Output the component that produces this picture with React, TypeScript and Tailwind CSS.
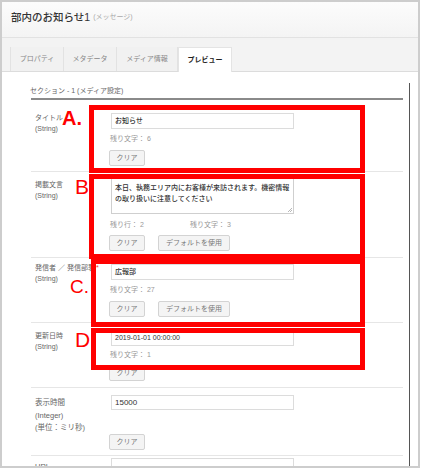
import React from 'react';

const font = { fontFamily: '"Liberation Sans", "Noto Sans CJK JP", sans-serif' };

const tabs = [
  { label: 'プロパティ', w: 'w-[54px]' },
  { label: 'メタデータ', w: 'w-[53px]' },
  { label: 'メディア情報', w: 'w-[61px]' },
];

const Btn = ({ children, w }: { children: React.ReactNode; w: string }) => (
  <div
    className={`${w} h-[16px] flex items-center justify-center border border-[#d3d3d3] bg-[#f4f4f4] rounded-[2px] text-[7px] text-[#777]`}
  >
    {children}
  </div>
);

const Field = ({ value, h = 'h-[16px]', big = false }: { value: string; h?: string; big?: boolean }) => (
  <div
    className={`ml-[2px] w-[183px] ${h} border border-[#dcdcdc] bg-white flex items-center px-[3px] text-[#333] ${
      big ? 'text-[8px]' : 'text-[7px] font-medium'
    }`}
  >
    {value}
  </div>
);

const Label = ({ lines, req = false, mt = 'mt-0' }: { lines: string[]; req?: boolean; mt?: string }) => (
  <div className={`w-[78px] pl-[4px] ${mt} text-[7px] leading-[11px] text-[#666] shrink-0`}>
    {lines.map((l, i) => (
      <div key={i} className="whitespace-nowrap">
        {l}
        {req && i === 0 && <span className="text-[#e33] ml-[1px]">*</span>}
      </div>
    ))}
  </div>
);

const Remain = ({ children, mt }: { children: React.ReactNode; mt: string }) => (
  <div className={`${mt} ml-[1px] h-[12px] leading-[12px] text-[7px] text-[#999] flex`}>{children}</div>
);

export default function App() {
  return (
    <div className="relative w-[422px] h-[470px] bg-white overflow-hidden" style={font}>
      <div className="w-[420px] h-[468px] border-2 border-[#cdcdcd] bg-white flex flex-col overflow-hidden">
        {/* header */}
        <div className="h-[36px] shrink-0 bg-gradient-to-b from-[#fcfcfc] to-[#f4f4f4] border-b border-[#e2e2e2] flex items-center pl-[9px] pb-[4px]">
          <span className="text-[10.5px] text-[#333] font-medium">部内のお知らせ1</span>
          <span className="text-[7px] text-[#aaa] ml-[3px]">(メッセージ)</span>
        </div>

        {/* tab strip */}
        <div className="h-[34px] shrink-0 bg-[#f3f3f3] border-b border-[#dcdcdc] flex items-end pl-[8px]">
          {tabs.map((t) => (
            <div
              key={t.label}
              className={`${t.w} h-[24px] flex items-center justify-center text-[7px] text-[#888] border-r border-[#e2e2e2] first:border-l bg-[#f1f1f1]`}
            >
              {t.label}
            </div>
          ))}
          <div className="w-[54px] h-[25px] -mb-px flex items-center justify-center text-[7px] text-[#222] font-semibold bg-white border-t border-x border-[#e4e4e4]">
            プレビュー
          </div>
        </div>

        {/* content */}
        <div className="flex-1 relative">
          <div className="absolute left-[407px] top-[11px] bottom-0 w-px bg-[#555]" />
          <div className="ml-[29px] mr-[15px] pt-[13px]">
            <div className="-ml-px text-[7px] text-[#666] h-[11px] leading-[11px]">セクション - 1 (メディア設定)</div>
            <div className="h-[2px] bg-[#8a8a8a] mt-[2px]" />

            {/* title */}
            <div className="flex pt-[13px] pb-[5px] border-b border-[#e6e6e6]">
              <Label lines={['タイトル', '(String)']} mt="-mt-[1px]" />
              <div className="flex flex-col">
                <Field value="お知らせ" />
                <Remain mt="mt-[4px]">残り文字： 6</Remain>
                <div className="mt-[5px]">
                  <Btn w="w-[36px]">クリア</Btn>
                </div>
              </div>
            </div>

            {/* message */}
            <div className="flex pt-[5px] pb-[6px] border-b border-[#e6e6e6]">
              <Label lines={['掲載文言', '(String)']} mt="mt-[2px]" />
              <div className="flex flex-col">
                <div className="relative ml-[2px] w-[183px] h-[37px] border border-[#cfcfcf] bg-white px-[3px] pt-[4px] text-[7px] leading-[11px] text-[#333] font-medium">
                  本日、執務エリア内にお客様が来訪されます。機密情報の取り扱いに注意してください
                  <svg className="absolute right-[1px] bottom-[1px]" width="5" height="5" viewBox="0 0 5 5">
                    <path d="M1 5L5 1M3 5L5 3" stroke="#999" strokeWidth="0.7" />
                  </svg>
                </div>
                <Remain mt="mt-[5px]">
                  <span className="w-[80px]">残り行： 2</span>
                  <span>残り文字： 3</span>
                </Remain>
                <div className="mt-[4px] flex gap-[13px]">
                  <Btn w="w-[36px]">クリア</Btn>
                  <Btn w="w-[72px]">デフォルトを使用</Btn>
                </div>
              </div>
            </div>

            {/* sender */}
            <div className="flex pt-[6px] pb-[5px] border-b border-[#e6e6e6]">
              <Label lines={['発信者 ／ 発信部署', '(String)']} req mt="-mt-[2px]" />
              <div className="flex flex-col">
                <Field value="広報部" />
                <Remain mt="mt-[4px]">残り文字： 27</Remain>
                <div className="mt-[5px] flex gap-[13px]">
                  <Btn w="w-[36px]">クリア</Btn>
                  <Btn w="w-[72px]">デフォルトを使用</Btn>
                </div>
              </div>
            </div>

            {/* updated */}
            <div className="flex pt-[8px] pb-[6px] border-b border-[#e6e6e6]">
              <Label lines={['更新日時', '(String)']} mt="-mt-[1px]" />
              <div className="flex flex-col">
                <Field value="2019-01-01 00:00:00" h="h-[15px]" />
                <Remain mt="mt-[3px]">残り文字： 1</Remain>
                <div className="mt-[4px]">
                  <Btn w="w-[36px]">クリア</Btn>
                </div>
              </div>
            </div>

            {/* display time */}
            <div className="flex pt-[7px] pb-[5px] border-b border-[#e6e6e6]">
              <div className="w-[78px] pl-[4px] mt-[2px] text-[7.5px] leading-[12.5px] text-[#666] shrink-0">
                <div>表示時間</div>
                <div>(Integer)</div>
                <div>(単位：ミリ秒)</div>
              </div>
              <div className="flex flex-col">
                <Field value="15000" h="h-[15px]" big />
                <div className="mt-[24px]">
                  <Btn w="w-[36px]">クリア</Btn>
                </div>
              </div>
            </div>

            {/* url */}
            <div className="flex pt-[2px]">
              <div className="w-[78px] pl-[4px] mt-[4px] text-[7.5px] leading-[10px] text-[#666]">URL</div>
              <Field value="" />
            </div>
          </div>
        </div>
      </div>

      {/* callout boxes */}
      <div className="absolute left-[89px] top-[105px] w-[276px] h-[68px] border-[5px] border-[#ff0000]" />
      <div className="absolute left-[89px] top-[174px] w-[276px] h-[85px] border-[5px] border-[#ff0000]" />
      <div className="absolute left-[91px] top-[259px] w-[274px] h-[68px] border-[5px] border-[#ff0000]" />
      <div className="absolute left-[91px] top-[328px] w-[274px] h-[42px] border-[5px] border-[#ff0000]" />

      <div className="absolute left-[62px] top-[107px] text-[20px] leading-[22px] font-bold text-[#ff0000]">A.</div>
      <div className="absolute left-[75px] top-[176px] text-[21px] leading-[22px] text-[#ff0000]">B</div>
      <div className="absolute left-[70px] top-[277px] text-[19px] leading-[20px] font-medium text-[#ff0000]">C.</div>
      <div className="absolute left-[75px] top-[329px] text-[21px] leading-[22px] text-[#ff0000]">D</div>
    </div>
  );
}
